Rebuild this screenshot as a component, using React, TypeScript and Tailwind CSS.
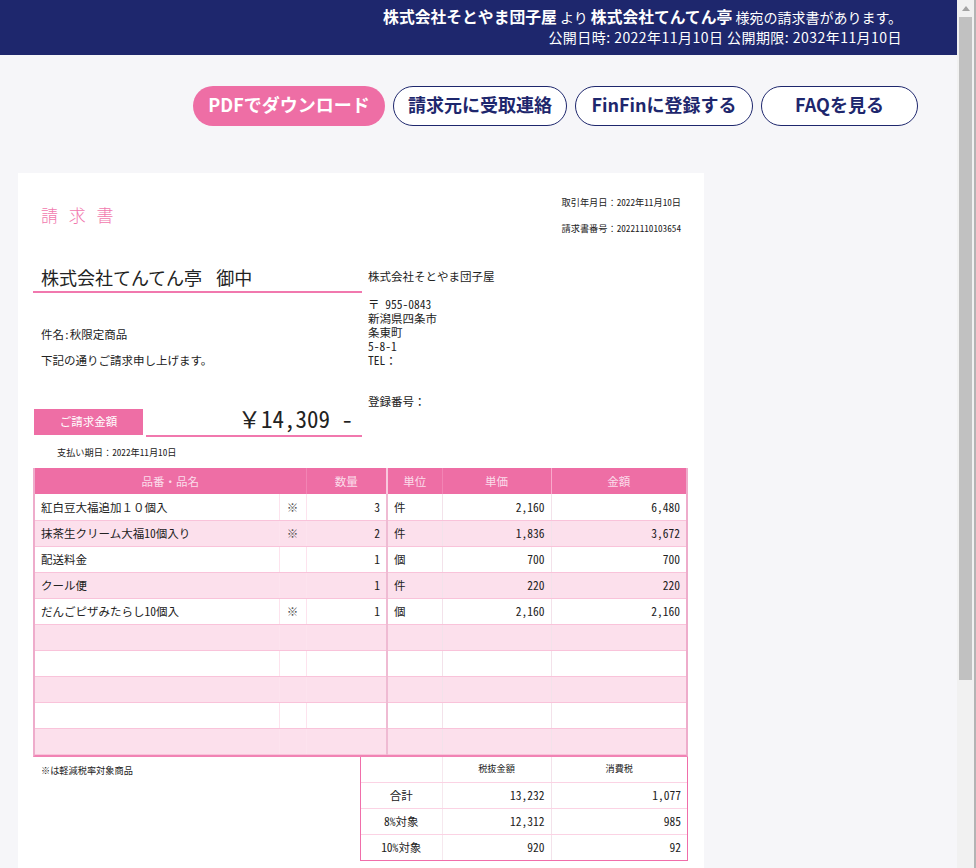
const rows = [
  { name: "紅白豆大福追加１０個入", mark: "※", qty: "3", unit: "件", price: "2,160", amount: "6,480" },
  { name: "抹茶生クリーム大福10個入り", mark: "※", qty: "2", unit: "件", price: "1,836", amount: "3,672" },
  { name: "配送料金", mark: "", qty: "1", unit: "個", price: "700", amount: "700" },
  { name: "クール便", mark: "", qty: "1", unit: "件", price: "220", amount: "220" },
  { name: "だんごピザみたらし10個入", mark: "※", qty: "1", unit: "個", price: "2,160", amount: "2,160" },
  { name: "", mark: "", qty: "", unit: "", price: "", amount: "" },
  { name: "", mark: "", qty: "", unit: "", price: "", amount: "" },
  { name: "", mark: "", qty: "", unit: "", price: "", amount: "" },
  { name: "", mark: "", qty: "", unit: "", price: "", amount: "" },
  { name: "", mark: "", qty: "", unit: "", price: "", amount: "" },
];

const summary = [
  { label: "合計", net: "13,232", tax: "1,077" },
  { label: "8%対象", net: "12,312", tax: "985" },
  { label: "10%対象", net: "920", tax: "92" },
];

const cell = "h-[26px] border-b border-b-[#f9c3da] p-0 pt-[2px] leading-none";

// half-width forms for the latin runs only, full-width ： ￥ １０ stay as they are
function T({ children }: { children: string }) {
  return (
    <>
      {children.split(/([\x20-\x7e]+)/).map((part, i) =>
        i % 2 === 1 ? (
          <span key={i} className="[font-feature-settings:'hwid']">
            {part}
          </span>
        ) : (
          part
        ),
      )}
    </>
  );
}

function Invoice() {
  return (
    <div className="ml-[18px] mt-[47px] w-[686px] bg-white pt-4 pb-10 text-[11.5px] text-[#222]">
      <div className="flex justify-between px-[23px]">
        <div className="mt-[13px] text-[17px] leading-[26px] font-light tracking-[1.1px] text-[#f178ae] [font-feature-settings:'hwid']">請 求 書</div>
        <div className="text-right text-[9.2px] leading-[26px]">
          <div><T>取引年月日：2022</T>年<T>11</T>月<T>10</T>日</div>
          <div><T>請求書番号：20221110103654</T></div>
        </div>
      </div>

      <div className="ml-[15px] flex">
        <div className="w-[329px]">
          <div className="mt-6 border-b-2 border-[#f178ae] pb-px pl-2 text-[18px] leading-[25px] [word-spacing:10px]">株式会社てんてん亭 御中</div>
          <div className="mt-7 pl-2 leading-[26px]"><T>件名:秋限定商品</T></div>
          <div className="pl-2 leading-[26px]">下記の通りご請求申し上げます。</div>
          <div className="mt-9 flex">
            <div className="ml-px flex h-[26px] w-[109px] items-center justify-center bg-[#ee6ea5] text-white">ご請求金額</div>
            <div className="ml-[3px] h-[28px] w-[216px] border-b-2 border-[#f178ae] pr-[9px] text-right text-[23px] leading-[18px]"><T>￥14,309 -</T></div>
          </div>
          <div className="mt-2 ml-6 text-[9.2px] leading-[14px]"><T>支払い期日：2022</T>年<T>11</T>月<T>10</T>日</div>
        </div>
        <div className="ml-[6px] pt-7 leading-[14px]">
          <div>株式会社そとやま団子屋</div>
          <div className="mt-[14px]"><T>〒 955-0843</T></div>
          <div>新潟県四条市</div>
          <div>条東町</div>
          <div><T>5-8-1</T></div>
          <div><T>TEL：</T></div>
          <div className="mt-[27px]">登録番号：</div>
        </div>
      </div>

      <div className="mt-[9px] ml-[15px] w-[655px] border-x-2 border-b-2 border-x-[#eeaccb] border-b-[#f183b4]">
        <table className="w-[651px] table-fixed border-collapse">
          <colgroup>
            <col className="w-[244px]" />
            <col className="w-[27px]" />
            <col className="w-[81px]" />
            <col className="w-[55px]" />
            <col className="w-[109px]" />
            <col className="w-[135px]" />
          </colgroup>
          <thead>
            <tr className="bg-[#ee6ea5] text-center font-normal text-[#fbdcea]">
              <th className="h-[26px] p-0 pt-[2px] font-normal" colSpan={2}>品番・品名</th>
              <th className="border-l border-l-[#f284b4] p-0 pt-[2px] font-normal">数量</th>
              <th className="border-l-2 border-l-[#f9c8de] p-0 pt-[2px] font-normal">単位</th>
              <th className="border-l border-l-[#f284b4] p-0 pt-[2px] font-normal">単価</th>
              <th className="border-l border-l-[#f9a9cb] p-0 pt-[2px] font-normal">金額</th>
            </tr>
          </thead>
          <tbody>
            {rows.map((row, i) => (
              <tr key={i} className={i % 2 === 1 ? "bg-[#fce0ec]" : "bg-white"}>
                <td className={`${cell} pl-[6px]`}><T>{row.name}</T></td>
                <td className={`${cell} border-l border-l-[#fde3ee] text-center text-[#555]`}>{row.mark}</td>
                <td className={`${cell} border-l border-l-[#fde3ee] pr-[6px] text-right`}><T>{row.qty}</T></td>
                <td className={`${cell} border-l-2 border-l-[#efbbd3] pl-[6px]`}>{row.unit}</td>
                <td className={`${cell} border-l border-l-[#f3e2ea] pr-[6px] text-right`}><T>{row.price}</T></td>
                <td className={`${cell} border-l border-l-[#f3e2ea] pr-[6px] text-right`}><T>{row.amount}</T></td>
              </tr>
            ))}
          </tbody>
        </table>
      </div>

      <div className="ml-[15px] flex">
        <div className="w-[327px] pt-[6px] pl-2 text-[9.2px] leading-[14px]">※は軽減税率対象商品</div>
        <div className="w-[328px] border-x border-b border-[#f06eaa]">
          <table className="w-[326px] table-fixed border-collapse">
            <colgroup>
              <col className="w-[81px]" />
              <col className="w-[109px]" />
              <col className="w-[136px]" />
            </colgroup>
            <tbody>
              <tr>
                <td className="h-[26px] border-b border-b-[#fbd3e4] p-0" />
                <td className="border-b border-l border-b-[#fbd3e4] border-l-[#f6e8ee] p-0 text-center text-[9.2px]">税抜金額</td>
                <td className="border-b border-l border-b-[#fbd3e4] border-l-[#f3e2ea] p-0 text-center text-[9.2px]">消費税</td>
              </tr>
              {summary.map((s, i) => (
                <tr key={s.label}>
                  <td className={`${i === 2 ? "h-[25px]" : "h-[26px] border-b border-b-[#fbd3e4]"} p-0 text-center`}><T>{s.label}</T></td>
                  <td className={`${i === 2 ? "" : "border-b border-b-[#fbd3e4]"} border-l border-l-[#f6e8ee] p-0 pr-[6px] text-right`}><T>{s.net}</T></td>
                  <td className={`${i === 2 ? "" : "border-b border-b-[#fbd3e4]"} border-l border-l-[#f3e2ea] p-0 pr-[6px] text-right`}><T>{s.tax}</T></td>
                </tr>
              ))}
            </tbody>
          </table>
        </div>
      </div>
    </div>
  );
}

export default function App() {
  return (
    <div className="flex h-[868px] overflow-hidden bg-[#f6f6f9] font-['Noto_Sans_CJK_JP',sans-serif]">
      <div className="min-w-0 flex-1">
        <header className="h-[55px] bg-[#1e276d] pt-[7px] pr-[55px] text-right text-sm leading-5 text-white">
          <div>
            <span className="text-[15.8px] font-bold">株式会社そとやま団子屋</span> より{" "}
            <span className="text-[15.8px] font-bold">株式会社てんてん亭</span> 様宛の請求書があります。
          </div>
          <div className="tracking-[0.46px]">公開日時: 2022年11月10日 公開期限: 2032年11月10日</div>
        </header>

        <div className="mt-[31px] flex justify-end gap-2 pr-[39px] text-lg leading-none font-bold">
          <button className="h-10 w-[192px] rounded-full bg-[#ee6ea5] pb-[5px] text-white">PDFでダウンロード</button>
          <button className="h-10 w-[174px] rounded-full border border-[#1e276d] bg-white pb-[5px] text-[#1e276d]">請求元に受取連絡</button>
          <button className="h-10 w-[178px] rounded-full border border-[#1e276d] bg-white pb-[5px] text-[#1e276d]">FinFinに登録する</button>
          <button className="h-10 w-[157px] rounded-full border border-[#1e276d] bg-white pb-[5px] text-[#1e276d]">FAQを見る</button>
        </div>

        <Invoice />
      </div>

      {/* scrollbar */}
      <div className="flex w-[19px] shrink-0 flex-col border-r-2 border-[#b4b4b4] bg-[#f1f1f1]">
        <div className="flex h-[17px] items-center justify-center">
          <svg width="8" height="5" viewBox="0 0 8 5">
            <path d="M4 0L8 5H0z" fill="#a3a3a3" />
          </svg>
        </div>
        <div className="mx-[2px] h-[663px] bg-[#c1c1c1]" />
      </div>
    </div>
  );
}
